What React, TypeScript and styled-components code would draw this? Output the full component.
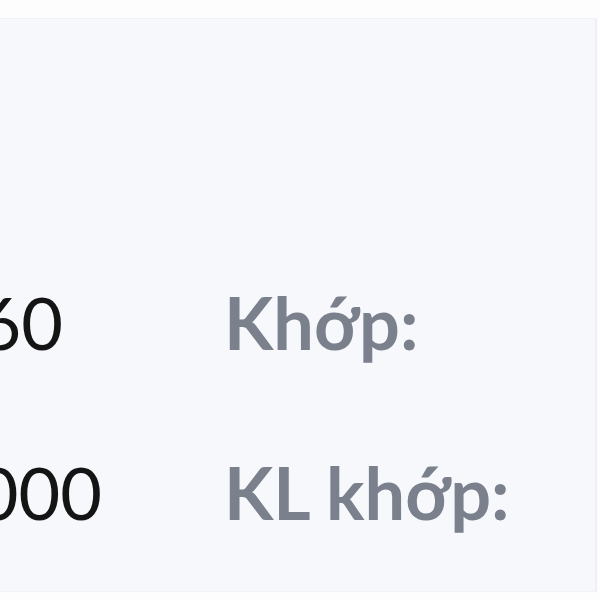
import React from "react";
import styled, { createGlobalStyle } from "styled-components";

const Global = createGlobalStyle`
  html, body { margin: 0; padding: 0; background: #fdfdfe; }
  body { font-family: Lato, "Noto Sans", sans-serif; }
`;

const Page = styled.div`
  width: 600px;
  height: 600px;
  padding-top: 18px;
  box-sizing: border-box;
  overflow: hidden;
`;

const Panel = styled.div`
  width: 597px;
  height: 574px;
  box-sizing: border-box;
  background: #f7f8fc;
  border-top: 1px solid #f1f2f7;
  border-right: 2px solid #eef0f5;
  border-bottom: 1px solid #f1f2f7;
  padding-top: 218px;
  overflow: hidden;
`;

const Row = styled.div`
  display: grid;
  grid-template-columns: 224px auto;
  height: 170px;
  line-height: 170px;
  font-size: 72px;
  white-space: nowrap;
`;

const Value = styled.div<{ $end: number }>`
  color: #141414;
  font-weight: 400;
  text-align: right;
  margin-left: -400px;
  width: ${(p) => p.$end + 400}px;
`;

const Label = styled.div`
  color: #7a808c;
  font-weight: 700;
`;

const rows = [
  { value: "25,760", end: 63, label: "Khớp:" },
  { value: "1,000,000", end: 102, label: "KL khớp:" },
];

export default function App() {
  return (
    <>
      <Global />
      <Page>
        <Panel>
          {rows.map((r) => (
            <Row key={r.label}>
              <Value $end={r.end}>{r.value}</Value>
              <Label>{r.label}</Label>
            </Row>
          ))}
        </Panel>
      </Page>
    </>
  );
}
